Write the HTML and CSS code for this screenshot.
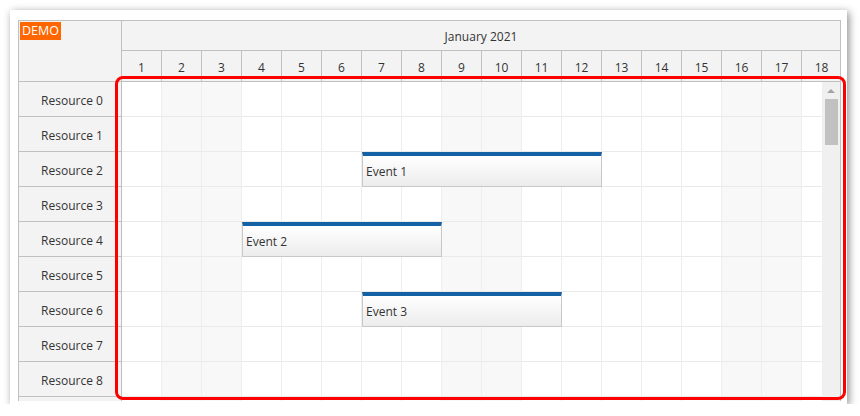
FILE: index.html
```html
<!DOCTYPE html>
<html>
<head>
<meta charset="utf-8">
<link rel="stylesheet" href="styles.css">
</head>
<body>
<div class="frame">
  <div class="scheduler">
    <div class="head">
      <div class="corner"><span class="demo">DEMO</span></div>
      <div class="timeline">
        <div class="month">January 2021</div>
        <div class="days">
          <div class="d">1</div><div class="d">2</div><div class="d">3</div><div class="d">4</div><div class="d">5</div><div class="d">6</div><div class="d">7</div><div class="d">8</div><div class="d">9</div><div class="d">10</div><div class="d">11</div><div class="d">12</div><div class="d">13</div><div class="d">14</div><div class="d">15</div><div class="d">16</div><div class="d">17</div><div class="d">18</div>
        </div>
      </div>
    </div>
    <div class="body">
      <div class="rh-col">
        <div class="rh">Resource 0</div>
        <div class="rh">Resource 1</div>
        <div class="rh">Resource 2</div>
        <div class="rh">Resource 3</div>
        <div class="rh">Resource 4</div>
        <div class="rh">Resource 5</div>
        <div class="rh">Resource 6</div>
        <div class="rh">Resource 7</div>
        <div class="rh">Resource 8</div>
        <div class="rh"></div>
      </div>
      <div class="grid">
        <div class="row"><div class="c"></div><div class="c we"></div><div class="c we"></div><div class="c"></div><div class="c"></div><div class="c"></div><div class="c"></div><div class="c"></div><div class="c we"></div><div class="c we"></div><div class="c"></div><div class="c"></div><div class="c"></div><div class="c"></div><div class="c"></div><div class="c we"></div><div class="c we"></div><div class="c"></div></div>
        <div class="row"><div class="c"></div><div class="c we"></div><div class="c we"></div><div class="c"></div><div class="c"></div><div class="c"></div><div class="c"></div><div class="c"></div><div class="c we"></div><div class="c we"></div><div class="c"></div><div class="c"></div><div class="c"></div><div class="c"></div><div class="c"></div><div class="c we"></div><div class="c we"></div><div class="c"></div></div>
        <div class="row"><div class="c"></div><div class="c we"></div><div class="c we"></div><div class="c"></div><div class="c"></div><div class="c"></div><div class="c"></div><div class="c"></div><div class="c we"></div><div class="c we"></div><div class="c"></div><div class="c"></div><div class="c"></div><div class="c"></div><div class="c"></div><div class="c we"></div><div class="c we"></div><div class="c"></div>
          <div class="ev" style="left:240px;width:240px">Event 1</div></div>
        <div class="row"><div class="c"></div><div class="c we"></div><div class="c we"></div><div class="c"></div><div class="c"></div><div class="c"></div><div class="c"></div><div class="c"></div><div class="c we"></div><div class="c we"></div><div class="c"></div><div class="c"></div><div class="c"></div><div class="c"></div><div class="c"></div><div class="c we"></div><div class="c we"></div><div class="c"></div></div>
        <div class="row"><div class="c"></div><div class="c we"></div><div class="c we"></div><div class="c"></div><div class="c"></div><div class="c"></div><div class="c"></div><div class="c"></div><div class="c we"></div><div class="c we"></div><div class="c"></div><div class="c"></div><div class="c"></div><div class="c"></div><div class="c"></div><div class="c we"></div><div class="c we"></div><div class="c"></div>
          <div class="ev" style="left:120px;width:200px">Event 2</div></div>
        <div class="row"><div class="c"></div><div class="c we"></div><div class="c we"></div><div class="c"></div><div class="c"></div><div class="c"></div><div class="c"></div><div class="c"></div><div class="c we"></div><div class="c we"></div><div class="c"></div><div class="c"></div><div class="c"></div><div class="c"></div><div class="c"></div><div class="c we"></div><div class="c we"></div><div class="c"></div></div>
        <div class="row"><div class="c"></div><div class="c we"></div><div class="c we"></div><div class="c"></div><div class="c"></div><div class="c"></div><div class="c"></div><div class="c"></div><div class="c we"></div><div class="c we"></div><div class="c"></div><div class="c"></div><div class="c"></div><div class="c"></div><div class="c"></div><div class="c we"></div><div class="c we"></div><div class="c"></div>
          <div class="ev" style="left:240px;width:200px">Event 3</div></div>
        <div class="row"><div class="c"></div><div class="c we"></div><div class="c we"></div><div class="c"></div><div class="c"></div><div class="c"></div><div class="c"></div><div class="c"></div><div class="c we"></div><div class="c we"></div><div class="c"></div><div class="c"></div><div class="c"></div><div class="c"></div><div class="c"></div><div class="c we"></div><div class="c we"></div><div class="c"></div></div>
        <div class="row"><div class="c"></div><div class="c we"></div><div class="c we"></div><div class="c"></div><div class="c"></div><div class="c"></div><div class="c"></div><div class="c"></div><div class="c we"></div><div class="c we"></div><div class="c"></div><div class="c"></div><div class="c"></div><div class="c"></div><div class="c"></div><div class="c we"></div><div class="c we"></div><div class="c"></div></div>
        <div class="row"><div class="c"></div><div class="c we"></div><div class="c we"></div><div class="c"></div><div class="c"></div><div class="c"></div><div class="c"></div><div class="c"></div><div class="c we"></div><div class="c we"></div><div class="c"></div><div class="c"></div><div class="c"></div><div class="c"></div><div class="c"></div><div class="c we"></div><div class="c we"></div><div class="c"></div></div>
      </div>
      <div class="scroll">
        <div class="arrow"></div>
        <div class="thumb"></div>
      </div>
    </div>
  </div>
  <div class="highlight"></div>
</div>
</body>
</html>
```
FILE: styles.css
```css
* { box-sizing: border-box; }
body {
  margin: 0;
  background: #fff;
  font-family: "Open Sans", "Noto Sans", sans-serif;
  color: #333;
}
.frame {
  position: relative;
  margin: 10px 0 0 10px;
  width: 837px;
  height: 394px;
  background: #fff;
  box-shadow: 2px 2px 8px rgba(0, 0, 0, 0.45);
  padding: 10px 0 0 8px;
}
.scheduler {
  width: 823px;
  height: 381px;
  border: 1px solid #c0c0c0;
  border-bottom: none;
  background: #fff;
  overflow: hidden;
  font-size: 12px;
}
.head { display: flex; height: 61px; }
.corner {
  flex: none;
  width: 103px;
  background: #f3f3f3;
  border-right: 1px solid #c0c0c0;
  border-bottom: 1px solid #c0c0c0;
}
.demo {
  display: inline-block;
  margin: 1px 0 0 1px;
  padding: 0 2px;
  height: 18px;
  line-height: 18px;
  background: #ff6600;
  color: #fff;
  font-size: 12.5px;
}
.timeline { flex: none; width: 718px; display: flex; flex-direction: column; }
.month {
  height: 30px;
  background: #f3f3f3;
  border-bottom: 1px solid #c0c0c0;
  display: flex;
  align-items: center;
  justify-content: center;
  padding-top: 2px;
}
.days { height: 31px; display: flex; overflow: hidden; }
.d {
  flex: none;
  width: 40px;
  background: #f3f3f3;
  border-right: 1px solid #c0c0c0;
  border-bottom: 1px solid #c0c0c0;
  display: flex;
  align-items: center;
  justify-content: center;
  padding-top: 2px;
}
.body { display: flex; height: 320px; }
.rh-col {
  flex: none;
  width: 103px;
  background: #f3f3f3;
  border-right: 1px solid #c0c0c0;
}
.rh {
  height: 35px;
  border-bottom: 1px solid #c0c0c0;
  display: flex;
  align-items: center;
  justify-content: center;
  padding: 2px 0 0 4px;
}
.grid { flex: none; width: 700px; overflow: hidden; }
.row { position: relative; display: flex; height: 35px; }
.c {
  flex: none;
  width: 40px;
  height: 35px;
  border-right: 1px solid #eeeeee;
  border-bottom: 1px solid #eaeaea;
}
.c.we { background: #f8f8f8; }
.ev {
  position: absolute;
  top: 0;
  height: 35px;
  border: 1px solid #c8c8c8;
  border-top: 4px solid #1561a6;
  background: linear-gradient(#ffffff, #ececec);
  padding-left: 3px;
  display: flex;
  align-items: center;
  font-size: 12px;
  color: #333;
}
.scroll {
  flex: none;
  width: 18px;
  background: #f0f0f0;
  display: flex;
  flex-direction: column;
  align-items: center;
}
.arrow {
  margin-top: 7px;
  width: 0;
  height: 0;
  border-left: 4px solid transparent;
  border-right: 4px solid transparent;
  border-bottom: 4px solid #a3a3a3;
}
.thumb {
  margin-top: 6px;
  width: 13px;
  height: 46px;
  background: #c1c1c1;
}
.highlight {
  position: absolute;
  left: 105px;
  top: 66px;
  width: 731px;
  height: 324px;
  border: 3px solid #ff0000;
  border-radius: 8px;
}
```
